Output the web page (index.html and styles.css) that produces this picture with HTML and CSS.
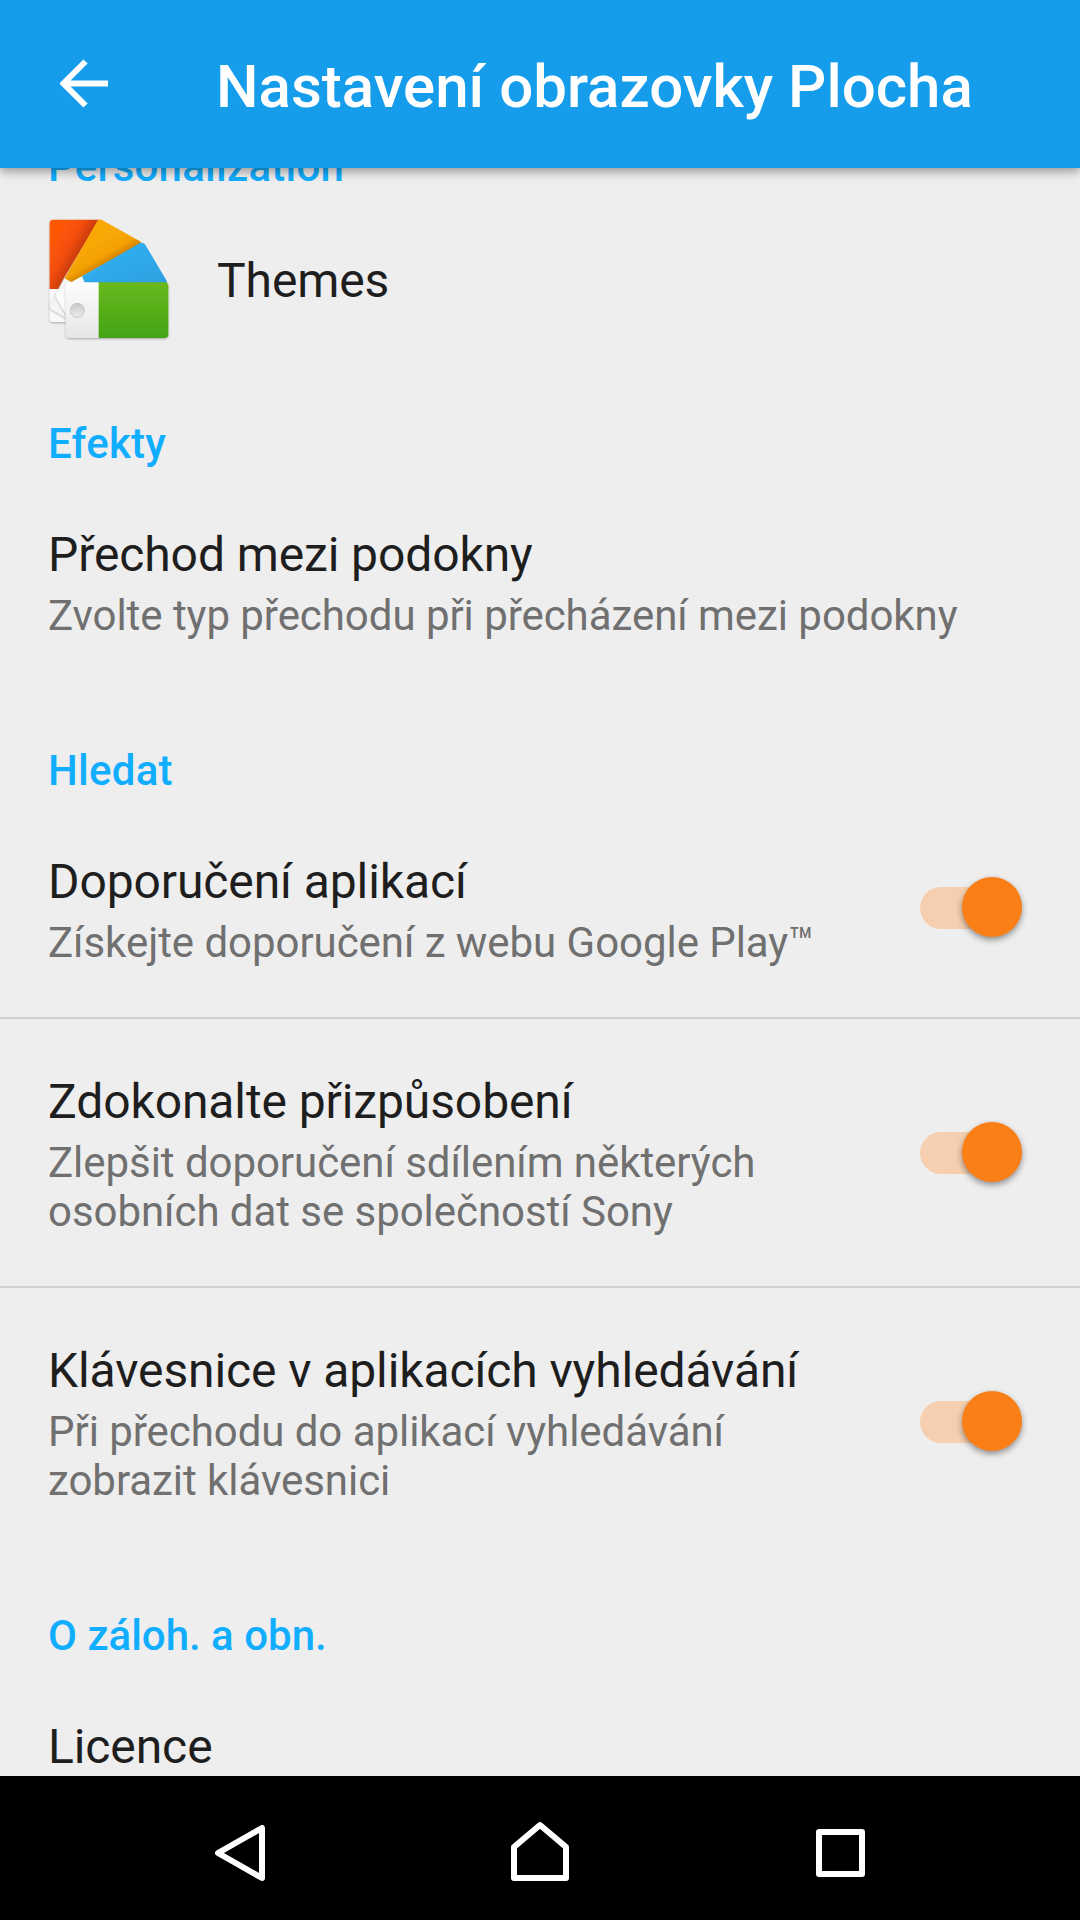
FILE: index.html
```html
<!DOCTYPE html>
<html lang="cs">
<head>
<meta charset="utf-8">
<title>Nastavení obrazovky Plocha</title>
<link rel="stylesheet" href="styles.css">
</head>
<body>
<header class="app-bar">
  <svg class="back" width="48" height="50" viewBox="0 0 48 50" fill="none" stroke="#fff" stroke-width="6"><path d="M25.500 2.500L3.500 24.500L25.500 46.500M4 24.500H48"/></svg>
  <h1 class="title">Nastavení obrazovky Plocha</h1>
</header>
<main class="list">
  <h2 class="category">Personalization</h2>
  <div class="item item-themes">
    <svg class="themes-icon" viewBox="54 60 360 360">
      <defs>
        <linearGradient id="red" gradientUnits="userSpaceOnUse" x1="65" y1="116" x2="145" y2="163"><stop offset="0" stop-color="#ff5805"/><stop offset=".6" stop-color="#f44e0b"/><stop offset="1" stop-color="#c93c09"/></linearGradient>
        <linearGradient id="amber" gradientUnits="userSpaceOnUse" x1="205" y1="120" x2="240" y2="180"><stop offset="0" stop-color="#f9a806"/><stop offset=".7" stop-color="#f4a003"/><stop offset="1" stop-color="#d58500"/></linearGradient>
        <linearGradient id="blue" x1="0" y1="0" x2="1" y2="1"><stop offset="0" stop-color="#2fb3f5"/><stop offset="1" stop-color="#2fa0e0"/></linearGradient>
        <linearGradient id="green" x1="0" y1="0" x2="0" y2="1"><stop offset="0" stop-color="#69b81f"/><stop offset="1" stop-color="#43a412"/></linearGradient>
        <linearGradient id="white" x1="0" y1="0" x2="0" y2="1"><stop offset="0" stop-color="#fdfdfd"/><stop offset="1" stop-color="#e6e6e6"/></linearGradient>
        <linearGradient id="hole" x1="0" y1="0" x2="0" y2="1"><stop offset="0" stop-color="#c9c9c9"/><stop offset="1" stop-color="#ececec"/></linearGradient>
        <filter id="shade" x="-20%" y="-20%" width="140%" height="140%"><feDropShadow dx="0" dy="3" stdDeviation="3.500" flood-opacity=".3"/></filter>
      </defs>
      <g filter="url(#shade)">
        <path d="M59 267H130V366H70Q59 366 59 355Z" fill="#f8f8f8"/>
        <path d="M59 70Q59 59 70 59H207L98 240L84 267H59Z" fill="url(#red)"/>
      </g>
      <path d="M104 236L150 262L130 366L62 326Q58 320 61 313Z" fill="#f5f5f5" filter="url(#shade)"/>
      <path d="M124 246L156 229L180 260V370L112 350L79 292Q75 284 82 277Z" fill="#fbfbfb" filter="url(#shade)"/>
      <path d="M202 63Q207 56 216 60L330 124Q336 128 328 134L124 246L104 235Z" fill="url(#amber)"/>
      <path d="M156 229L329 130Q340 125 346 134L409 241Q412 246 411 252H166Z" fill="url(#blue)"/>
      <g filter="url(#shade)">
        <path d="M118 247H207V414H118Q107 414 107 403V258Q107 247 118 247Z" fill="url(#white)"/>
        <path d="M206 247H404Q415 247 415 258V403Q415 414 404 414H206Z" fill="url(#green)"/>
      </g>
      <circle cx="142" cy="331" r="21" fill="url(#hole)" stroke="#c6c6c6" stroke-width="3"/>
    </svg>
    <span class="name">Themes</span>
  </div>

  <h2 class="category">Efekty</h2>
  <div class="item">
    <div class="text">
      <div class="name">Přechod mezi podokny</div>
      <div class="summary">Zvolte typ přechodu při přecházení mezi podokny</div>
    </div>
  </div>

  <h2 class="category">Hledat</h2>
  <div class="item divided">
    <div class="text">
      <div class="name">Doporučení aplikací</div>
      <div class="summary">Získejte doporučení z webu Google Play™</div>
    </div>
    <div class="switch"><div class="thumb"></div></div>
  </div>
  <div class="item divided">
    <div class="text">
      <div class="name">Zdokonalte přizpůsobení</div>
      <div class="summary">Zlepšit doporučení sdílením některých<br>osobních dat se společností Sony</div>
    </div>
    <div class="switch"><div class="thumb"></div></div>
  </div>
  <div class="item">
    <div class="text">
      <div class="name">Klávesnice v aplikacích vyhledávání</div>
      <div class="summary">Při přechodu do aplikací vyhledávání<br>zobrazit klávesnici</div>
    </div>
    <div class="switch"><div class="thumb"></div></div>
  </div>

  <h2 class="category">O záloh. a obn.</h2>
  <div class="item">
    <div class="text"><div class="name">Licence</div></div>
  </div>
</main>
<nav class="nav-bar">
  <svg width="300" height="144" viewBox="90 1776 300 144"><path d="M218 1853L262 1828V1878Z"/></svg>
  <svg width="300" height="144" viewBox="390 1776 300 144"><path d="M514 1847L540 1825L566 1847V1878H514Z"/></svg>
  <svg width="300" height="144" viewBox="690 1776 300 144"><path d="M819 1832H862V1874H819Z"/></svg>
</nav>
</body>
</html>
```
FILE: styles.css
```css
* {
  box-sizing: border-box;
}

body {
  margin: 0;
  width: 1080px;
  height: 1920px;
  overflow: hidden;
  display: flex;
  flex-direction: column;
  background: #eee;
  font-family: Roboto, "Noto Sans", sans-serif;
}

.app-bar {
  flex: none;
  height: 168px;
  display: flex;
  align-items: center;
  padding-left: 60px;
  background: #159ceb;
  box-shadow: 0 3px 10px rgba(0, 0, 0, .4);
  z-index: 1;
}

.back {
  flex: none;
  margin-right: 108px;
}

.title {
  margin: 6px 0 0;
  font-size: 60px;
  line-height: 70px;
  font-weight: 500;
  color: #fff;
  white-space: nowrap;
}

.list {
  flex: 1;
  min-height: 0;
  overflow: hidden;
}

.category {
  height: 107px;
  margin: 0;
  padding: 54px 48px 4px;
  font-size: 42px;
  line-height: 49px;
  font-weight: 500;
  letter-spacing: .25px;
  color: #11adff;
}

.category:last-of-type {
  letter-spacing: 0;
}

/* The list is scrolled so the first heading sits partly under the app bar. */
.category:first-child {
  margin-top: -80px;
}

.item {
  display: flex;
  align-items: center;
  justify-content: space-between;
  padding: 55px 58px 52px 48px;
}

.item-themes {
  height: 170px;
  padding: 0 48px;
  justify-content: flex-start;
  gap: 49px;
}

.item-themes .name {
  padding-top: 2px;
}

.themes-icon {
  width: 120px;
  height: 120px;
  overflow: visible;
}

.divided {
  padding-bottom: 50px;
  border-bottom: 2px solid #d0d0d0;
}

.name {
  font-size: 48px;
  line-height: 56px;
  letter-spacing: -.1px;
  color: #1e1e1e;
  white-space: nowrap;
}

.summary {
  margin-top: 8px;
  font-size: 42px;
  line-height: 49px;
  letter-spacing: -.05px;
  color: #707070;
  white-space: nowrap;
}

.switch {
  flex: none;
  display: flex;
  align-items: center;
  justify-content: flex-end;
  width: 102px;
  height: 42px;
  margin-top: -5px;
  border-radius: 21px;
  background: #f5cfaf;
}

.thumb {
  flex: none;
  width: 60px;
  height: 60px;
  margin: 0 .4px 1.4px 0;
  border-radius: 50%;
  background: #fa7f17;
  box-shadow: 0 3px 6px rgba(0, 0, 0, .4);
}

.nav-bar {
  flex: none;
  height: 144px;
  display: flex;
  justify-content: center;
  background: #000;
}

.nav-bar path {
  fill: none;
  stroke: #fff;
  stroke-width: 6;
  stroke-linejoin: round;
}
```
